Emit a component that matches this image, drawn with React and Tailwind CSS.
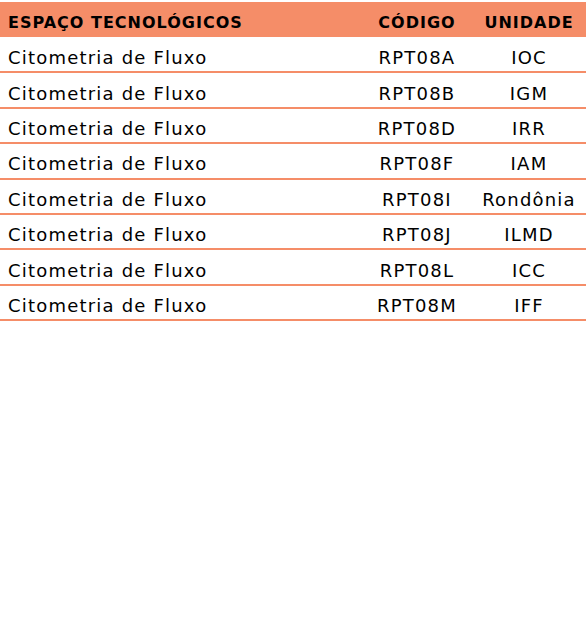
export default function App() {
  const rows = [
    ["RPT08A", "IOC"],
    ["RPT08B", "IGM"],
    ["RPT08D", "IRR"],
    ["RPT08F", "IAM"],
    ["RPT08I", "Rondônia"],
    ["RPT08J", "ILMD"],
    ["RPT08L", "ICC"],
    ["RPT08M", "IFF"],
  ];
  return (
    <div className="w-[588px] h-[627px] bg-white pt-[2px]" style={{ fontFamily: '"DejaVu Sans", sans-serif' }}>
      <table className="w-[586px] border-collapse text-[18px] text-black tracking-[1.2px]">
        <thead>
          <tr className="bg-[#f58d68] h-[35px]">
            <th className="w-[362px] text-left pl-[8px] pt-[6px] font-bold text-[16px] tracking-[1px]">ESPAÇO TECNOLÓGICOS</th>
            <th className="w-[110px] text-center pt-[6px] font-bold text-[16px] tracking-[1px]">CÓDIGO</th>
            <th className="text-center pt-[6px] font-bold text-[16px] tracking-[1px]">UNIDADE</th>
          </tr>
        </thead>
        <tbody>
          {rows.map(([c, u]) => (
            <tr key={c} className="h-[35.4px] border-b-2 border-[#f58d68]">
              <td className="pl-[8px] pt-[6px]">Citometria de Fluxo</td>
              <td className="text-center pt-[6px]">{c}</td>
              <td className="text-center pt-[6px]">{u}</td>
            </tr>
          ))}
        </tbody>
      </table>
    </div>
  );
}
